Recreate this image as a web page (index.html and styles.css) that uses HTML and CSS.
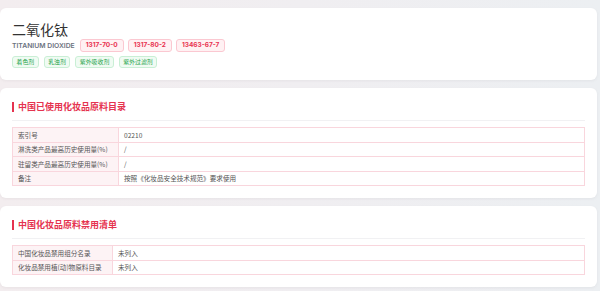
FILE: index.html
```html
<!DOCTYPE html>
<html lang="zh">
<head>
<meta charset="utf-8">
<link rel="stylesheet" href="styles.css">
</head>
<body>
<div class="page">
  <section class="card head-card">
    <h1 class="title">二氧化钛</h1>
    <div class="row">
      <span class="en-name">TITANIUM DIOXIDE</span>
      <span class="tag tag-red">1317-70-0</span>
      <span class="tag tag-red">1317-80-2</span>
      <span class="tag tag-red">13463-67-7</span>
    </div>
    <div class="row row-green">
      <span class="tag tag-green">着色剂</span>
      <span class="tag tag-green">乳浊剂</span>
      <span class="tag tag-green">紫外吸收剂</span>
      <span class="tag tag-green">紫外过滤剂</span>
    </div>
  </section>

  <section class="card">
    <h2 class="sec-title">中国已使用化妆品原料目录</h2>
    <table class="info">
      <colgroup><col class="c1"><col></colgroup>
      <tr><th>索引号</th><td>02210</td></tr>
      <tr><th>淋洗类产品最高历史使用量(%)</th><td>/</td></tr>
      <tr><th>驻留类产品最高历史使用量(%)</th><td>/</td></tr>
      <tr><th>备注</th><td>按照《化妆品安全技术规范》要求使用</td></tr>
    </table>
  </section>

  <section class="card">
    <h2 class="sec-title">中国化妆品原料禁用清单</h2>
    <table class="info">
      <colgroup><col class="c2"><col></colgroup>
      <tr><th>中国化妆品禁用组分名录</th><td>未列入</td></tr>
      <tr><th>化妆品禁用植(动)物原料目录</th><td>未列入</td></tr>
    </table>
  </section>
</div>
</body>
</html>
```

FILE: styles.css
```css
html, body {
  margin: 0;
  padding: 0;
}
body {
  width: 600px;
  height: 291px;
  overflow: hidden;
  background: linear-gradient(90deg, #f3edef 0%, #f0eef1 50%, #eceff2 100%);
  font-family: "Noto Sans CJK SC", "Noto Sans", sans-serif;
  color: #444;
}
.page {
  display: flex;
  flex-direction: column;
  gap: 8px;
  padding: 8px 3px 0 0;
}
.card {
  background: #fff;
  border-radius: 6px;
  padding: 12px;
  box-shadow: 0 1px 3px rgba(120, 100, 110, 0.08);
}
.title {
  margin: 0;
  font-size: 14px;
  line-height: 18px;
  font-weight: 400;
  color: #333;
}
.row {
  display: flex;
  align-items: center;
  gap: 4px;
  height: 13px;
  margin-top: 0.5px;
}
.row-green {
  margin-top: 4px;
  gap: 5px;
  height: 12.5px;
}
.en-name {
  font-family: "Inter", "Liberation Sans", sans-serif;
  font-size: 6.8px;
  font-weight: 600;
  color: #6b7280;
  margin-right: 1px;
}
.tag {
  display: inline-flex;
  align-items: center;
  justify-content: center;
  box-sizing: border-box;
  border-radius: 3px;
  border: 1px solid;
  white-space: nowrap;
}
.tag-red {
  height: 13px;
  padding: 0 5px;
  font-family: "Inter", "Liberation Sans", sans-serif;
  font-size: 6.5px;
  font-weight: 700;
  color: #e8324f;
  background: #fff1f3;
  border-color: #fbc8d1;
}
.tag-green {
  height: 12.5px;
  padding: 0 3.5px;
  font-size: 5.9px;
  color: #1fa34a;
  background: #f0fbf3;
  border-color: #c9efd5;
}
.sec-title {
  position: relative;
  margin: 0;
  font-size: 9px;
  line-height: 14px;
  font-weight: 700;
  color: #e5334f;
  padding-left: 6px;
  padding-bottom: 6px;
  border-bottom: 1px solid #f1f1f3;
}
.sec-title::before {
  content: "";
  position: absolute;
  left: 0;
  top: 2px;
  width: 1.5px;
  height: 10px;
  background: #e5334f;
}
.info {
  margin-top: 6px;
  width: 100%;
  border-collapse: collapse;
  table-layout: fixed;
  font-size: 6.6px;
  color: #555;
}
.info th, .info td {
  border: 1px solid #f9d6dd;
  height: 14.5px;
  padding: 0 5px;
  text-align: left;
  font-weight: 400;
  line-height: 12px;
  white-space: nowrap;
  overflow: hidden;
  box-sizing: border-box;
}
.info th {
  background: #fdf3f5;
}
.c1 { width: 106px; }
.c2 { width: 100px; }
```
